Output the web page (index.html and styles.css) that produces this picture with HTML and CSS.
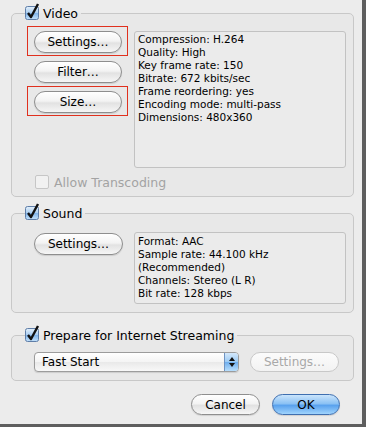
FILE: index.html
```html
<!DOCTYPE html>
<html lang="en">
<head>
    <meta charset="UTF-8">
    <title>Movie Settings</title>
    <link rel="stylesheet" href="styles.css">
</head>
<body>
    <div class="dialog">
        <fieldset class="group">
            <legend class="group-title">
                <svg class="check" width="14" height="14" viewBox="0 0 14 14"><defs><linearGradient id="cb1" x1="0" y1="0" x2="0" y2="1"><stop offset="0" stop-color="#e4f0fb"/><stop offset="0.5" stop-color="#a9cdf1"/><stop offset="0.51" stop-color="#7fb3ea"/><stop offset="1" stop-color="#c4e2fb"/></linearGradient></defs><rect x="0.5" y="0.5" width="13" height="13" rx="2" fill="url(#cb1)" stroke="#5f7ea8"/><path d="M3 7 L6 11 L13 -2" fill="none" stroke="#111" stroke-width="2.4" stroke-linejoin="round"/></svg>
                Video
            </legend>
            <div class="group-body video-body">
                <div class="video-row">
                    <div class="slots">
                        <div class="slot marked"><button class="aqua">Settings…</button></div>
                        <div class="slot"><button class="aqua">Filter…</button></div>
                        <div class="slot marked"><button class="aqua">Size…</button></div>
                    </div>
                    <div class="info video-info">
                        Compression: H.264<br>
                        Quality: High<br>
                        Key frame rate: 150<br>
                        Bitrate: 672 kbits/sec<br>
                        Frame reordering: yes<br>
                        Encoding mode: multi-pass<br>
                        Dimensions: 480x360
                    </div>
                </div>
                <div class="transcode">
                    <span class="check-off"></span>
                    Allow Transcoding
                </div>
            </div>
        </fieldset>

        <fieldset class="group sound">
            <legend class="group-title">
                <svg class="check" width="14" height="14" viewBox="0 0 14 14"><defs><linearGradient id="cb2" x1="0" y1="0" x2="0" y2="1"><stop offset="0" stop-color="#e4f0fb"/><stop offset="0.5" stop-color="#a9cdf1"/><stop offset="0.51" stop-color="#7fb3ea"/><stop offset="1" stop-color="#c4e2fb"/></linearGradient></defs><rect x="0.5" y="0.5" width="13" height="13" rx="2" fill="url(#cb2)" stroke="#5f7ea8"/><path d="M3 7 L6 11 L13 -2" fill="none" stroke="#111" stroke-width="2.4" stroke-linejoin="round"/></svg>
                Sound
            </legend>
            <div class="group-body sound-body">
                <button class="aqua sound-btn">Settings…</button>
                <div class="info sound-info">
                    Format: AAC<br>
                    Sample rate: 44.100 kHz<br>
                    (Recommended)<br>
                    Channels: Stereo (L R)<br>
                    Bit rate: 128 kbps
                </div>
            </div>
        </fieldset>

        <fieldset class="group stream">
            <legend class="group-title">
                <svg class="check" width="14" height="14" viewBox="0 0 14 14"><defs><linearGradient id="cb3" x1="0" y1="0" x2="0" y2="1"><stop offset="0" stop-color="#e4f0fb"/><stop offset="0.5" stop-color="#a9cdf1"/><stop offset="0.51" stop-color="#7fb3ea"/><stop offset="1" stop-color="#c4e2fb"/></linearGradient></defs><rect x="0.5" y="0.5" width="13" height="13" rx="2" fill="url(#cb3)" stroke="#5f7ea8"/><path d="M3 7 L6 11 L13 -2" fill="none" stroke="#111" stroke-width="2.4" stroke-linejoin="round"/></svg>
                Prepare for Internet Streaming
            </legend>
            <div class="group-body stream-body">
                <div class="popup">
                    <span class="popup-label">Fast Start</span>
                    <span class="popup-arrows">
                        <svg width="8" height="12" viewBox="0 0 8 12"><path d="M4 1 L7 5 H1 Z M4 11 L7 7 H1 Z" fill="#111"/></svg>
                    </span>
                </div>
                <button class="aqua disabled">Settings…</button>
            </div>
        </fieldset>

        <div class="footer">
            <button class="aqua cancel">Cancel</button>
            <button class="aqua ok">OK</button>
        </div>
    </div>
</body>
</html>
```

FILE: styles.css
```css
body {
    margin: 0;
    background: #5e5e5e;
    font-family: "DejaVu Sans", sans-serif;
    font-size: 12px;
    color: #000;
}
.dialog {
    width: 362px;
    height: 424px;
    box-sizing: border-box;
    padding: 5px 8px 0 11px;
    background: #ececec;
}
.group {
    margin: 0;
    padding: 0;
    min-width: 0;
    border: 1px solid #c8c8c8;
    border-radius: 5px;
    background: #e8e8e8;
}
.group-title {
    display: flex;
    align-items: center;
    gap: 4px;
    height: 16px;
    margin-left: 13px;
    padding: 0 3px 0 0;
    font-size: 12.5px;
}
.check {
    overflow: visible;
    flex: none;
}
.group-body {
    display: flex;
}
.video-body {
    flex-direction: column;
    padding: 5px 7px 7px 15px;
}
.video-row {
    display: flex;
    gap: 6px;
}
.slots {
    display: flex;
    flex-direction: column;
    width: 101px;
    flex: none;
}
.slot {
    height: 30px;
    box-sizing: border-box;
    border: 1px solid transparent;
    padding: 4px 5px 0 6px;
}
.slot.marked {
    border-color: #e0301e;
}
.aqua {
    height: 22px;
    padding: 0;
    border: 1px solid #8e8e8e;
    border-radius: 11px;
    background: linear-gradient(#ffffff, #f3f3f3 45%, #e2e2e2 55%, #f6f6f6);
    box-shadow: 0 1px 1px rgba(0,0,0,0.12);
    font-family: "DejaVu Sans", sans-serif;
    font-size: 12px;
    color: #000;
}
.slot .aqua {
    width: 88px;
}
.info {
    flex: 1;
    border: 1px solid #c2c2c2;
    border-radius: 3px;
    background: #ebebeb;
    padding: 1px 3px;
    font-size: 10.5px;
    line-height: 13px;
}
.video-info {
    height: 137px;
    box-sizing: border-box;
    margin-top: 5px;
}
.transcode {
    display: flex;
    align-items: center;
    gap: 5px;
    height: 14px;
    margin: 7px 0 0 8px;
    color: #a3a3a3;
    font-size: 12.5px;
}
.check-off {
    width: 12px;
    height: 12px;
    border: 1px solid #c6c6c6;
    border-radius: 2px;
    background: #f1f1f1;
}
.sound {
    margin-top: 8px;
}
.sound-body {
    gap: 11px;
    padding: 11px 7px 8px 22px;
    align-items: flex-start;
}
.sound-btn {
    width: 89px;
    margin-top: 1px;
}
.sound-info {
    height: 72px;
    box-sizing: border-box;
    padding-top: 2px;
}
.stream {
    margin-top: 14px;
}
.stream-body {
    gap: 11px;
    padding: 9px 7px 8px 22px;
}
.popup {
    display: flex;
    width: 205px;
    height: 20px;
    box-sizing: border-box;
    border: 1px solid #9c9c9c;
    border-radius: 4px;
    background: linear-gradient(#ffffff, #f4f4f4 50%, #e9e9e9 51%, #f8f8f8);
    box-shadow: 0 1px 1px rgba(0,0,0,0.12);
    overflow: hidden;
}
.popup-label {
    flex: 1;
    padding-left: 7px;
    line-height: 18px;
}
.popup-arrows {
    display: flex;
    align-items: center;
    justify-content: center;
    width: 13px;
    border-left: 1px solid #6f93c2;
    background: linear-gradient(#d4e8fb, #9ccaf3 50%, #6eaeee 51%, #b8defc);
}
.disabled {
    width: 89px;
    height: 20px;
    border-color: #c8c8c8;
    background: linear-gradient(#fbfbfb, #f2f2f2);
    box-shadow: none;
    color: #a8a8a8;
}
.footer {
    display: flex;
    justify-content: flex-end;
    gap: 12px;
    margin-top: 13px;
    padding-right: 14px;
}
.cancel {
    width: 69px;
    height: 21px;
}
.ok {
    width: 68px;
    height: 21px;
    border-color: #3f6fb0;
    background: linear-gradient(#cbe5fc, #8cc2f4 45%, #5aa2ee 55%, #a0d4fd);
}
```
